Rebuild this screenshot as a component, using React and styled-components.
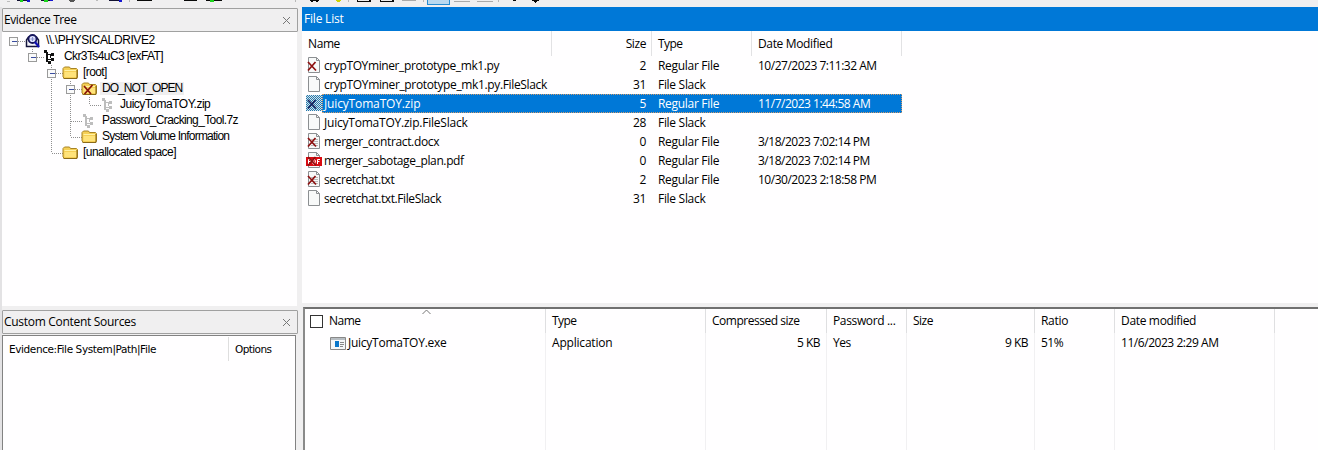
import React from "react";
import styled, { createGlobalStyle } from "styled-components";

const Global = createGlobalStyle`
  * { box-sizing: border-box; }
  body { margin: 0; overflow: hidden; background: #f0eff0; }
`;

const segoe = `"Open Sans", "Noto Sans", sans-serif`;

const Window = styled.div`
  width: 1318px; height: 450px; overflow: hidden; background: #f0eff0;
  font: 12px/18px ${segoe}; color: #000; display: flex; flex-direction: column;
`;
const Toolbar = styled.div`height: 7px; flex: none; overflow: hidden; svg { display: block; }`;
const Body = styled.div`display: flex; flex: 1; min-height: 0;`;
const Left = styled.div`
  width: 298px; border-left: 2px solid #e3e2e4; padding-top: 1px;
  display: flex; flex-direction: column; flex: none;
`;
const Right = styled.div`flex: 1; min-width: 0; margin-left: 4px; display: flex; flex-direction: column;`;
const T = styled.span`letter-spacing: ${p => p.$ls || 0}px; white-space: pre; flex: none;`;
const PanelTitle = styled.div`
  height: 24px; flex: none; border: 1px solid #a0a0a0; border-radius: 1px; background: #f0eff0;
  display: flex; align-items: center; justify-content: space-between; padding: 0 6px 1px 1px;
  svg { display: block; margin-top: 1px; }
`;
const Tree = styled.div`
  height: 274px; background: #fffeff; flex: none; padding-top: 1px; margin: 0 1px 4px 0;
`;
const TreeRow = styled.div`
  display: flex; height: 16px; font: 12px/16px "Liberation Sans", Arial, sans-serif;
  svg { flex: none; }
`;
const TreeLabel = styled.span`
  height: 13px; line-height: 13px; margin: 1px 0 0 3px; padding: 0 2px; white-space: pre;
  letter-spacing: ${p => p.$ls || 0}px; background: ${p => (p.$on ? "#efeeef" : "none")};
`;
const Sources = styled.div`
  flex: 1; margin: 1px 2px 0 0; border: 1px solid #828282; border-bottom: 0; background: #fffeff;
  display: flex; align-items: flex-start; font: 10.5px/25px "DejaVu Sans", Tahoma, sans-serif; padding-top: 1px;
`;
const SourceCol = styled.div`
  width: ${p => p.$w}px; height: 24px; padding-left: 6px; border-right: ${p => (p.$line ? 1 : 0)}px solid #dedede;
`;
const BlueTitle = styled.div`height: 24px; flex: none; background: #0078d7; color: #fff; padding: 3px 0 0 2px;`;
const FileList = styled.div`height: 272px; flex: none; background: #fffeff;`;
const Columns = styled.div`display: grid; grid-template-columns: 250px 100px 100px 150px; width: 600px;`;
const HeadCell = styled.div`
  height: 25px; padding: 4px 5px 0 6px; border-right: 1px solid #e2e2e4;
  text-align: ${p => (p.$right ? "right" : "left")};
`;
const FileRow = styled(Columns)`
  height: 19px; position: relative; color: ${p => (p.$on ? "#fff" : "#000")};
  background: ${p => (p.$on ? "linear-gradient(90deg, transparent 20px, #0078d7 20px)" : "none")};
  &::after {
    content: ""; display: ${p => (p.$on ? "block" : "none")};
    position: absolute; inset: 0 0 0 20px; border: 1px dotted #cf9a6c;
  }
`;
const Cell = styled.div`
  padding: ${p => (p.$name ? "0 0 0 4px" : "0 6px")}; height: 19px; line-height: 19px; white-space: nowrap;
  text-align: ${p => (p.$right ? "right" : "left")}; display: ${p => (p.$name ? "flex" : "block")};
  svg { flex: none; display: block; }
`;
const Archive = styled.div`
  flex: 1; margin: 4px 0 0 1px; background: #fffeff; border-top: 2px solid #707070; border-left: 2px solid #8a8a8a;
  display: grid; grid-template-columns: 241px 160px 121px 80px 128px 80px 160px 1fr;
`;
const ArchiveCol = styled.div`
  position: relative; padding: 0 6px; display: flex; flex-direction: column;
  &::after {
    content: ""; display: ${p => (p.$last ? "none" : "block")};
    position: absolute; top: 0; right: 0; bottom: 0; width: 1px;
    background: linear-gradient(#dfdfe1 24px, #f1f0f2 24px);
  }
`;
const ArchiveHead = styled.div`height: 24px; line-height: 24px; display: flex; align-items: center; white-space: pre;`;
const ArchiveCell = styled.div`
  height: 20px; line-height: 20px; display: flex; align-items: center; justify-content: ${p => (p.$right ? "flex-end" : "flex-start")};
  padding-left: ${p => p.$indent || 0}px; padding-right: ${p => (p.$right ? 1 : 0)}px;
`;
const ExeIcon = styled.svg`margin-right: 2px; flex: none;`;
const Check = styled.span`width: 13px; height: 13px; border: 1px solid #333; background: #fff; margin-right: 6px; margin-left: -1px;`;
const Sort = styled.svg`position: absolute; left: 117px; top: 0;`;

const Close = () => (
  <svg width="9" height="9"><path d="M1 1 8 8M8 1 1 8" stroke="#777" fill="none" /></svg>
);

const ToolStrip = () => (
  <svg width="1318" height="7" shapeRendering="crispEdges">
    <path d="M17 0h13v1h-13zM41 0h12v1h-12zM109 0h13v1h-13z" fill="#101030" />
    <path d="M20 0h3v2h-3zM44 0h4v2h-4zM210 0h4v2h-4z" fill="#1bd41b" />
    <path d="M27 0h3v2h-3zM50 0h3v1h-3zM119 0h3v2h-3z" fill="#1515d0" />
    <path d="M69 0h6v1h-6zM70 1h4v1h-4z" fill="#555" />
    <path d="M7 1h3v1h-3zM96 0h2v1h-2z" fill="#bbb" />
    <path d="M129 0h1v2h-1zM295 0h1v2h-1zM348 0h1v2h-1zM423 0h1v2h-1zM498 0h1v2h-1z" fill="#b8b8b8" />
    <path d="M137 0h15v1h-15zM184 0h13v1h-13zM206 0h4v1h-4zM214 0h8v1h-8zM310 0h9v1h-9zM311 1h2v1h-2zM316 1h2v1h-2zM357 0h14v2h-14zM380 0h14v2h-14zM513 0h3v1h-3zM532 0h7v1h-7zM534 1h3v1h-3zM535 2h1v1h-1z" fill="#080808" />
    <path d="M358 0h11v1h-11zM381 0h11v1h-11z" fill="#eee" />
    <path d="M336 0h5v1h-5zM337 1h3v1h-3z" fill="#cfd400" />
    <path d="M402 0h14v1h-14zM454 1h16v1h-16zM477 1h16v1h-16z" fill="#aaa" />
    <path d="M427 0h22v4h-22z" fill="#b9d9f0" /><path d="M427.500 0v4.500h22V0" stroke="#268bd2" fill="none" />
  </svg>
);

const Folder = ({ x, deleted }) => (
  <g transform={`translate(${x} 0)`}>
    <path d="M.5 3.500 2 2h5l1 1.500h6l1 1V12l-1 1.500H2L.5 12z" fill="#f5cf55" stroke="#a88424" />
    <path d="M2 5.500h11.500" stroke="#fff2a5" /><path d="M2 7h12v5H2z" fill="#ffe37a" />
    <path d="M1 13.500h13.500V5" fill="none" stroke="#8a6a18" />
    {deleted && <path d="m2.500 5 7 8M11 4l-8 9" stroke="#8a1408" strokeWidth="1.800" />}
  </g>
);
const Partition = ({ x, color }) => (
  <g transform={`translate(${x} 0)`} fill={color} shapeRendering="crispEdges">
    <path d="M0 1h3v3H0zM2 3h2v10H2zM4 12h3v3H4zM4 5h3v1H4zM6 5h1v4H6zM7 4h3v3H7zM4 10h3v1H4zM7 9h3v3H7z" />
  </g>
);
const Drive = ({ x }) => (
  <g transform={`translate(${x} 0)`}>
    <path d="M1 13.500V7l2-3h8l2 3v6.500z" fill="#f3f3f8" stroke="#14143c" strokeWidth="1.500" />
    <circle cx="7" cy="6" r="4" fill="#dfe3ff" stroke="#16165c" strokeWidth="1.800" />
    <path d="M5 6h4M7 4v4" stroke="#8890cc" /><path d="m9.500 9 4 5" stroke="#1111b5" strokeWidth="2.200" />
  </g>
);

/* Guide lines, expander and icon that precede a tree label. */
const TreeArt = ({ row }) => {
  const { depth, kind, open, guides = [], end } = row;
  const cx = 11.5 + depth * 19;
  return (
    <svg width={row.w} height="16">
      <g stroke="#8f8f8f" strokeDasharray="1 1" fill="none" shapeRendering="crispEdges">
        {guides.map(g => <path key={g} d={`M${11.5 + g * 19} 0v16`} />)}
        <path d={`M${cx} 8.500h11`} />
        {depth > 0 && <path d={`M${cx} 0v${end ? 8 : 16}`} />}
      </g>
      {open && (
        <g shapeRendering="crispEdges">
          <rect x={cx - 4} y="4.500" width="8" height="8" fill="#fafafa" stroke="#9a9a9a" />
          <path d={`M${cx - 2} 8.500h5`} stroke="#3b4da0" />
        </g>
      )}
      {kind === "drive" && <Drive x={cx + 12} />}
      {kind === "part" && <Partition x={cx + 11.5} color="#111" />}
      {kind === "ghost" && <Partition x={cx + 12.5} color="#bdbdbd" />}
      {(kind === "folder" || kind === "deleted") && <Folder x={cx + 11} deleted={kind === "deleted"} />}
    </svg>
  );
};

const tree = [
  { t: "\\\\.\\PHYSICALDRIVE2", depth: 0, kind: "drive", open: true, w: 39, ls: -0.4 },
  { t: "Ckr3Ts4uC3 [exFAT]", depth: 1, kind: "part", open: true, end: true, w: 57, ls: -0.6 },
  { t: "[root]", depth: 2, kind: "folder", open: true, w: 76, ls: -0.6 },
  { t: "DO_NOT_OPEN", depth: 3, kind: "deleted", open: true, guides: [2], w: 95, on: true, ls: -0.95 },
  { t: "JuicyTomaTOY.zip", depth: 4, kind: "ghost", guides: [2, 3], end: true, w: 113, ls: -0.5 },
  { t: "Password_Cracking_Tool.7z", depth: 3, kind: "ghost", guides: [2], w: 95, ls: -0.62 },
  { t: "System Volume Information", depth: 3, kind: "folder", guides: [2], end: true, w: 95, ls: -0.78 },
  { t: "[unallocated space]", depth: 2, kind: "folder", end: true, w: 76, ls: -0.55 },
];

const FileIcon = ({ kind }) => (
  <svg width="18" height="18" viewBox="0 0 18 18">
    {kind === "sel" && (
      <>
        <defs>
          <pattern id="dither" width="2" height="2" patternUnits="userSpaceOnUse">
            <rect width="2" height="2" fill="#d5e4e8" /><path d="M0 0h1v1H0zM1 1h1v1H1z" fill="#2578b0" />
          </pattern>
        </defs>
        <rect x="0" y="1" width="16" height="16" fill="url(#dither)" />
      </>
    )}
    {kind !== "sel" && <path d="M2.500 1.500h8l3 3v12h-11z" fill="#f8f9f9" stroke="#8c8f92" />}
    {kind !== "sel" && <path d="M10.500 1.500v3h3" fill="none" stroke="#8c8f92" />}
    {(kind === "doc" || kind === "pdf") && <path d="M5 7.500h7M5 9.500h7M5 11.500h7M5 13.500h7" stroke="#bbb" />}
    {kind === "pdf" && (
      <>
        <rect x="0" y="6" width="16" height="9" fill="#d90b12" />
        <path d="M2.500 13V8.500h2v2h-2M7 13V8.500h1.500l1 1.500-1 3zM11.500 13V8.500H14M11.500 10.500h2" stroke="#fff" fill="none" />
      </>
    )}
    {kind !== "plain" && (
      <path d="m2 6 8 8.500M9.500 6l-7.500 8.500" stroke={kind === "sel" ? "#17245f" : "#8e1010"} strokeWidth="1.700" />
    )}
  </svg>
);

const files = [
  ["x", "crypTOYminer_prototype_mk1.py", "2", "Regular File", "10/27/2023 7:11:32 AM", -0.39],
  ["plain", "crypTOYminer_prototype_mk1.py.FileSlack", "31", "File Slack", "", -0.36],
  ["sel", "JuicyTomaTOY.zip", "5", "Regular File", "11/7/2023 1:44:58 AM", -0.15],
  ["plain", "JuicyTomaTOY.zip.FileSlack", "28", "File Slack", "", -0.22],
  ["doc", "merger_contract.docx", "0", "Regular File", "3/18/2023 7:02:14 PM", -0.35],
  ["pdf", "merger_sabotage_plan.pdf", "0", "Regular File", "3/18/2023 7:02:14 PM", -0.38],
  ["doc", "secretchat.txt", "2", "Regular File", "10/30/2023 2:18:58 PM", -0.42],
  ["plain", "secretchat.txt.FileSlack", "31", "File Slack", "", -0.4],
];

const archive = [
  { head: "Type", hls: -0.6, value: "Application", vls: -0.2 },
  { head: "Compressed size", hls: -0.48, value: "5 KB", vls: -0.5, right: true },
  { head: "Password ...", hls: -0.35, value: "Yes", vls: -0.5 },
  { head: "Size", hls: -0.5, value: "9 KB", vls: -0.5, right: true },
  { head: "Ratio", hls: -0.3, value: "51%", vls: -0.5 },
  { head: "Date modified", hls: -0.33, value: "11/6/2023 2:29 AM", vls: -0.45 },
];

export default function App() {
  return (
    <Window>
      <Global />
      <Toolbar><ToolStrip /></Toolbar>
      <Body>
        <Left>
          <PanelTitle><T $ls={-0.4}>Evidence Tree</T><Close /></PanelTitle>
          <Tree>
            {tree.map(r => (
              <TreeRow key={r.t}>
                <TreeArt row={r} />
                <TreeLabel $on={r.on} $ls={r.ls}>{r.t}</TreeLabel>
              </TreeRow>
            ))}
          </Tree>
          <PanelTitle><T $ls={-0.3}>Custom Content Sources</T><Close /></PanelTitle>
          <Sources>
            <SourceCol $w={226} $line><T $ls={-0.4}>Evidence:File System|Path|File</T></SourceCol>
            <SourceCol $w={66}><T $ls={-0.6}>Options</T></SourceCol>
          </Sources>
        </Left>
        <Right>
          <BlueTitle><T $ls={-0.2}>File List</T></BlueTitle>
          <FileList>
            <Columns>
              <HeadCell><T $ls={-0.4}>Name</T></HeadCell>
              <HeadCell $right><T $ls={-0.4}>Size</T></HeadCell>
              <HeadCell><T $ls={-0.6}>Type</T></HeadCell>
              <HeadCell><T $ls={-0.35}>Date Modified</T></HeadCell>
            </Columns>
            {files.map(([kind, name, size, type, date, ls]) => (
              <FileRow key={name} $on={kind === "sel"}>
                <Cell $name><FileIcon kind={kind} /><T $ls={ls}>{name}</T></Cell>
                <Cell $right><T $ls={-0.4}>{size}</T></Cell>
                <Cell><T $ls={-0.3}>{type}</T></Cell>
                <Cell><T $ls={-0.49}>{date}</T></Cell>
              </FileRow>
            ))}
          </FileList>
          <Archive>
            <ArchiveCol>
              <ArchiveHead><Check /><T $ls={-0.5}>Name</T></ArchiveHead>
              <Sort width="9" height="6"><path d="m.5 5 4-4 4 4" fill="none" stroke="#777" /></Sort>
              <ArchiveCell $indent={19}>
                <ExeIcon width="16" height="13">
                  <path d="M.5.5h15v12H.5z" fill="#f5f7f8" stroke="#888" /><path d="M1 1h14v2H1z" fill="#b7bdc2" />
                  <path d="M5 4h4v6H5z" fill="#0876ca" /><path d="M10 5.500h4M10 7.500h4M10 9.500h3" stroke="#888" />
                </ExeIcon>
                <T $ls={-0.25}>JuicyTomaTOY.exe</T>
              </ArchiveCell>
            </ArchiveCol>
            {archive.map(c => (
              <ArchiveCol key={c.head}>
                <ArchiveHead><T $ls={c.hls}>{c.head}</T></ArchiveHead>
                <ArchiveCell $right={c.right}><T $ls={c.vls}>{c.value}</T></ArchiveCell>
              </ArchiveCol>
            ))}
            <ArchiveCol $last />
          </Archive>
        </Right>
      </Body>
    </Window>
  );
}
